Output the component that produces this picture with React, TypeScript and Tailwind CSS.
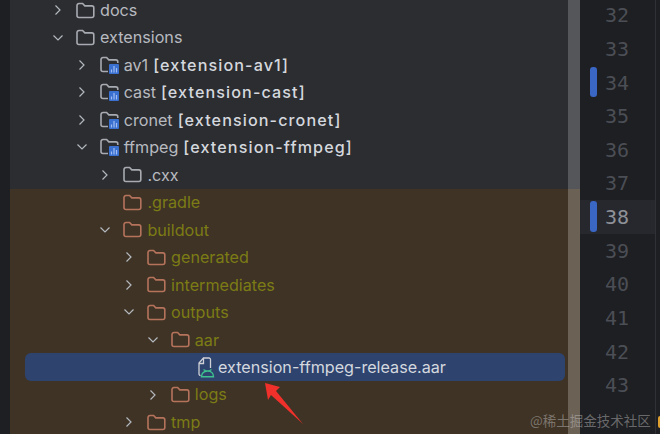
import React from "react";

type Node = {
  name: string;
  module?: string;
  level: number;
  open?: boolean;
  kind?: "folder" | "module" | "file";
  excluded?: boolean;
  noArrow?: boolean;
  selected?: boolean;
};

const topRows: Node[] = [
  { name: "docs", level: 0 },
  { name: "extensions", level: 0, open: true },
  { name: "av1", module: "[extension-av1]", level: 1, kind: "module" },
  { name: "cast", module: "[extension-cast]", level: 1, kind: "module" },
  { name: "cronet", module: "[extension-cronet]", level: 1, kind: "module" },
  { name: "ffmpeg", module: "[extension-ffmpeg]", level: 1, kind: "module", open: true },
  { name: ".cxx", level: 2 },
];

const buildRows: Node[] = [
  { name: ".gradle", level: 2, excluded: true, noArrow: true },
  { name: "buildout", level: 2, open: true, excluded: true },
  { name: "generated", level: 3, excluded: true },
  { name: "intermediates", level: 3, excluded: true },
  { name: "outputs", level: 3, open: true, excluded: true },
  { name: "aar", level: 4, open: true, excluded: true },
  { name: "extension-ffmpeg-release.aar", level: 5, kind: "file", noArrow: true, selected: true },
  { name: "logs", level: 4, excluded: true },
  { name: "tmp", level: 3, excluded: true },
];

const gutter = [32, 33, 34, 35, 36, 37, 38, 39, 40, 41, 42, 43];

const Chevron = ({ open }: { open?: boolean }) => (
  <svg width="12" height="12" viewBox="0 0 12 12" fill="none" stroke="#b4b8bf" strokeWidth="1.2">
    {open ? <path d="M1.5 3.5 6 8l4.5-4.5" /> : <path d="M3.5 1.5 8 6l-4.5 4.5" />}
  </svg>
);

const Folder = ({ color }: { color: string }) => (
  <svg width="19" height="17" viewBox="0 0 19 17" fill="none" stroke={color} strokeWidth="1.6">
    <path d="M1 3.5A2 2 0 0 1 3 1.5h3.6l2.2 2.4H15.8a2 2 0 0 1 2 2V13.5a2 2 0 0 1-2 2H3a2 2 0 0 1-2-2Z" />
  </svg>
);

const ModuleFolder = () => (
  <svg width="19" height="18" viewBox="0 0 19 18" fill="none">
    <path
      d="M8 15.5H3a2 2 0 0 1-2-2V3.5a2 2 0 0 1 2-2h3.6l2.2 2.4h7a2 2 0 0 1 2 2V7"
      stroke="#a8abb2"
      strokeWidth="1.6"
    />
    <rect x="9" y="8" width="10" height="10" rx="1" fill="#3a70d0" />
    <path d="M11.5 16.5v-3M14 16.5V10M16.5 16.5v-4.5" stroke="#9fbdf2" strokeWidth="1.2" />
  </svg>
);

const AarFile = () => (
  <svg width="17" height="21" viewBox="0 0 17 21" fill="none">
    <path
      d="M2.5 18.5A1.5 1.5 0 0 1 1 17V6l4.5-5h5.5A1.5 1.5 0 0 1 12.5 2.5V11"
      stroke="#ced0d6"
      strokeWidth="1.3"
    />
    <path d="M1 6.5h4.5V1" stroke="#ced0d6" strokeWidth="1.3" />
    <path
      d="M5.5 12.5 8 14h3l2.5-1.5M3.5 19.8c0-3 2-5.8 6-5.8s6 2.8 6 5.8ZM3 19.8h13"
      stroke="#3ec28f"
      strokeWidth="1.4"
    />
  </svg>
);

const Row = ({ node }: { node: Node }) => {
  const kind = node.kind ?? "folder";
  const nameColor = node.selected ? "text-[#d4d8df]" : node.excluded ? "text-[#7c7c15]" : "text-[#b8bac0]";
  const indent = node.selected ? 149 : 42 + node.level * 23.7;
  return (
    <div
      style={{ paddingLeft: indent }}
      className={
        "flex h-[27.47px] items-center whitespace-nowrap text-[16.15px] " +
        (node.selected ? "ml-[15px] mr-[3px] rounded-md bg-[#2e436e]" : "")
      }
    >
      <span className="flex w-[24px] shrink-0 items-center">
        {!node.noArrow && <Chevron open={node.open} />}
      </span>
      <span className={"flex shrink-0 items-center " + (kind === "file" ? "w-[20px]" : "w-[24px]")}>
        {kind === "folder" && <Folder color={node.excluded ? "#b5735c" : "#a8abb2"} />}
        {kind === "module" && <ModuleFolder />}
        {kind === "file" && <AarFile />}
      </span>
      <span className={nameColor}>{node.name}</span>
      {node.module && (
        <span className="ml-[5px] font-medium tracking-[1.1px] text-[#d5d8de]">{node.module}</span>
      )}
    </div>
  );
};

export default function App() {
  return (
    <div className="relative flex h-[434px] w-[660px] overflow-hidden bg-[#2b2d30] font-['Inter',sans-serif]">
      <div className="w-[10px] shrink-0 bg-[#1e1f22]" />

      <div className="flex w-[558px] shrink-0 flex-col">
        <div className="-mt-[3.7px] h-[192.3px]">
          {topRows.map((node) => (
            <Row key={node.name} node={node} />
          ))}
        </div>
        <div className="flex-1 bg-[#3f3325]">
          {buildRows.map((node) => (
            <Row key={node.name} node={node} />
          ))}
        </div>
      </div>

      <div className="flex w-[12px] shrink-0 flex-col">
        <div className="h-[188.6px] bg-[#55565a]" />
        <div className="flex-1 bg-[#6b6155]" />
      </div>

      <div className="flex-1 bg-[#1e1f22] font-['DejaVu_Sans_Mono',monospace] text-[20px] text-[#4b4e55]">
        <div className="-mt-[1.6px] mr-[4px] h-[440px] border-r border-[#2f3136] pr-[26px]">
          {gutter.map((line) => (
            <div
              key={line}
              className={
                "relative flex h-[33.65px] items-center justify-end " +
                (line === 38 ? "-mr-[26px] bg-[#26282e] pr-[26px] text-[#8f9198]" : "")
              }
            >
              {(line === 34 || line === 38) && (
                <span className="absolute top-[1px] bottom-[2px] left-[10px] w-[7px] rounded-[3px] bg-[#3a66c4]" />
              )}
              {line}
            </div>
          ))}
        </div>
      </div>

      <svg className="absolute left-[262px] top-[380px]" width="44" height="46" viewBox="0 0 44 46">
        <path d="M3 3 18 7 14 11 41 44 9 15 6 20Z" fill="#f0302a" />
      </svg>

      <span className="absolute left-[530px] top-[411px] whitespace-nowrap font-['Noto_Sans_CJK_SC',sans-serif] text-[13.5px] leading-[18px] text-[#c8c8c8]/45">
        @稀土掘金技术社区
      </span>
      <span className="absolute left-[658px] top-[416px] h-[12px] w-[4px] rounded-full bg-[#e0a030]" />
    </div>
  );
}
